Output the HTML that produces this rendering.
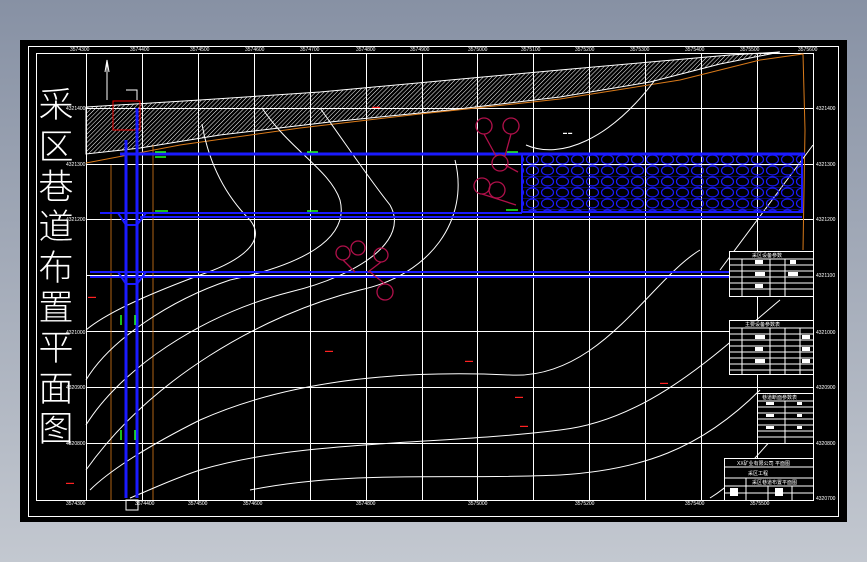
<!DOCTYPE html>
<html><head><meta charset="utf-8"><style>
html,body{margin:0;padding:0;width:867px;height:562px;overflow:hidden;background:linear-gradient(#8791a4,#c3c8d0);}
svg{position:absolute;left:0;top:0}
</style></head><body>
<svg width="867" height="562" viewBox="0 0 867 562" font-family="Liberation Sans, sans-serif">
<defs>
<pattern id="hat" width="3" height="3" patternUnits="userSpaceOnUse" patternTransform="rotate(45)"><line x1="0" y1="0" x2="0" y2="3" stroke="#fff" stroke-width="1"/></pattern>
<pattern id="goaf" width="15" height="11" patternUnits="userSpaceOnUse"><ellipse cx="7.5" cy="5.5" rx="6" ry="4.5" fill="none" stroke="#1a1aff" stroke-width="1.2"/><line x1="0" y1="0" x2="15" y2="0" stroke="#1a1aff" stroke-width="0.8"/></pattern>
</defs>
<rect x="20" y="40" width="827" height="482" fill="#000"/>
<rect x="28.5" y="46.5" width="810" height="470" fill="none" stroke="#fff"/>
<g stroke="#fff" stroke-width="1" fill="none">
<line x1="36.5" y1="53" x2="36.5" y2="500"/>
<line x1="36" y1="53.5" x2="813" y2="53.5"/>
<line x1="36" y1="500.5" x2="813" y2="500.5"/>
<line x1="813.5" y1="53" x2="813.5" y2="500"/>
<line x1="86" y1="108.5" x2="813" y2="108.5"/><line x1="86" y1="164.5" x2="813" y2="164.5"/><line x1="86" y1="219.5" x2="813" y2="219.5"/><line x1="86" y1="275.5" x2="813" y2="275.5"/><line x1="86" y1="331.5" x2="813" y2="331.5"/><line x1="86" y1="387.5" x2="813" y2="387.5"/><line x1="86" y1="443.5" x2="813" y2="443.5"/>
<line x1="86.5" y1="53" x2="86.5" y2="500"/><line x1="142.5" y1="53" x2="142.5" y2="500"/><line x1="198.5" y1="53" x2="198.5" y2="500"/><line x1="254.5" y1="53" x2="254.5" y2="500"/><line x1="310.5" y1="53" x2="310.5" y2="500"/><line x1="366.5" y1="53" x2="366.5" y2="500"/><line x1="422.5" y1="53" x2="422.5" y2="500"/><line x1="477.5" y1="53" x2="477.5" y2="500"/><line x1="533.5" y1="53" x2="533.5" y2="500"/><line x1="589.5" y1="53" x2="589.5" y2="500"/><line x1="645.5" y1="53" x2="645.5" y2="500"/><line x1="701.5" y1="53" x2="701.5" y2="500"/><line x1="757.5" y1="53" x2="757.5" y2="500"/>
</g>
<path d="M86,107 L200,100 L320,92 L450,80 L560,70 L650,62 L730,55 L780,52 L720,64 L650,82 L560,97 L450,110 L330,122 L220,135 L140,148 L86,154 Z" fill="url(#hat)" stroke="#fff" stroke-width="1"/>
<rect x="113" y="101" width="27" height="29" fill="none" stroke="#e00" stroke-width="1"/>
<path d="M86,163 L180,145 L300,128 L420,114 L560,99 L680,80 L760,60 L803,54 L805,130 L803,250" fill="none" stroke="#d97a1a" stroke-width="1"/>
<path d="M111,165 V500 M153,145 V500" stroke="#d97a1a" stroke-width="1" fill="none" opacity=".8"/>
<g stroke="#fff" stroke-width="1" fill="none">
<path d="M202,124 C210,170 230,200 250,220 C270,245 230,265 200,275 C160,290 110,310 86,330"/>
<path d="M262,108 C290,150 330,170 340,200 C350,240 300,265 230,280 C170,300 110,340 86,380"/>
<path d="M320,108 C350,150 370,180 390,205 C410,240 360,275 290,292 C200,315 120,370 86,425"/>
<path d="M455,160 C470,220 430,275 360,290 C260,315 150,380 86,470"/>
<path d="M526,145 C560,160 610,140 655,80"/>
<path d="M700,250 C650,280 600,380 510,375 C400,370 290,380 200,420 C150,445 110,470 90,490"/>
<path d="M780,300 C720,350 650,420 560,430 C440,445 300,440 200,470 C170,480 150,490 130,498"/>
<path d="M760,390 C700,450 640,470 560,475 C450,480 350,470 250,490"/>
<path d="M813,145 C780,190 750,230 720,270"/>
<path d="M790,420 C760,450 740,480 710,498"/>
</g>
<rect x="522" y="154" width="280" height="58" fill="url(#goaf)" stroke="#1a1aff" stroke-width="2"/>
<g stroke="#1a1aff" fill="none">
<line x1="120" y1="154" x2="805" y2="154" stroke-width="3"/>
<line x1="100" y1="213" x2="522" y2="213" stroke-width="2"/>
<line x1="140" y1="217" x2="802" y2="217" stroke-width="2"/>
<line x1="90" y1="272" x2="810" y2="272" stroke-width="2"/>
<line x1="90" y1="277" x2="810" y2="277" stroke-width="2"/>
<line x1="126" y1="140" x2="126" y2="498" stroke-width="3"/>
<line x1="137" y1="108" x2="137" y2="498" stroke-width="3"/>
<path d="M118,213 L126,225 L137,225 L146,213" stroke-width="2"/>
<path d="M118,272 L126,284 L137,284 L146,272" stroke-width="2"/>
</g>
<g stroke="#2f2" stroke-width="1.5">
<line x1="155" y1="152" x2="166" y2="152"/><line x1="155" y1="157" x2="166" y2="157"/>
<line x1="307" y1="152" x2="318" y2="152"/><line x1="507" y1="152" x2="518" y2="152"/>
<line x1="155" y1="211" x2="168" y2="211"/><line x1="307" y1="211" x2="318" y2="211"/><line x1="506" y1="210" x2="518" y2="210"/>
<line x1="121" y1="315" x2="121" y2="325"/><line x1="135" y1="315" x2="135" y2="325"/>
<line x1="121" y1="430" x2="121" y2="440"/><line x1="135" y1="430" x2="135" y2="440"/>
</g>
<g stroke="#b0104a" stroke-width="1.3" fill="none">
<circle cx="484" cy="126" r="8"/><circle cx="511" cy="126" r="8"/><circle cx="500" cy="163" r="8"/><circle cx="482" cy="186" r="8"/><circle cx="497" cy="190" r="8"/>
<path d="M484,134 L496,156 M511,134 L505,156 M505,165 L518,172 M482,194 L516,205"/>
<circle cx="343" cy="253" r="7"/><circle cx="358" cy="248" r="7"/><circle cx="381" cy="255" r="7"/><circle cx="385" cy="292" r="8"/>
<path d="M343,260 L355,272 M381,262 L368,272 M385,284 L370,272"/>
</g>
<g font-size="4" fill="#fff">
<text x="372" y="108" fill="#f22">▬▬</text><text x="563" y="134">▬ ▬</text><text x="325" y="352" fill="#f22">▬▬</text><text x="465" y="362" fill="#f22">▬▬</text><text x="515" y="398" fill="#f22">▬▬</text><text x="520" y="427" fill="#f22">▬▬</text><text x="660" y="384" fill="#f22">▬▬</text><text x="88" y="298" fill="#f22">▬▬</text><text x="66" y="484" fill="#f22">▬▬</text>
</g>
<g font-size="5" fill="#fff">
<text x="70" y="51">3574300</text><text x="130" y="51">3574400</text><text x="190" y="51">3574500</text><text x="245" y="51">3574600</text><text x="300" y="51">3574700</text><text x="356" y="51">3574800</text><text x="410" y="51">3574900</text><text x="468" y="51">3575000</text><text x="521" y="51">3575100</text><text x="575" y="51">3575200</text><text x="630" y="51">3575300</text><text x="685" y="51">3575400</text><text x="740" y="51">3575500</text><text x="798" y="51">3575600</text>
<text x="66" y="110">4321400</text><text x="66" y="166">4321300</text><text x="66" y="221">4321200</text><text x="66" y="334">4321000</text><text x="66" y="389">4320900</text><text x="66" y="445">4320800</text>
<text x="816" y="110">4321400</text><text x="816" y="166">4321300</text><text x="816" y="221">4321200</text><text x="816" y="277">4321100</text><text x="816" y="334">4321000</text><text x="816" y="389">4320900</text><text x="816" y="445">4320800</text><text x="816" y="500">4320700</text>
<text x="66" y="505">3574300</text><text x="135" y="505">3574400</text><text x="188" y="505">3574500</text><text x="243" y="505">3574600</text><text x="356" y="505">3574800</text><text x="468" y="505">3575000</text><text x="575" y="505">3575200</text><text x="685" y="505">3575400</text><text x="750" y="505">3575500</text>
</g>
<path d="M107,60 L107,100 M105,72 L107,60 L109,72" stroke="#fff" fill="none"/>
<path d="M126,90 H137 V100" stroke="#fff" fill="none"/>
<rect x="126" y="500" width="12" height="10" fill="none" stroke="#fff"/>
<g font-family="'Noto Sans CJK SC', sans-serif" font-weight="300" font-size="35" fill="#fff" text-anchor="middle">
<text x="56" y="117">采</text><text x="56" y="159">区</text><text x="56" y="199">巷</text><text x="56" y="239">道</text><text x="56" y="280">布</text><text x="56" y="320">置</text><text x="56" y="360">平</text><text x="56" y="401">面</text><text x="56" y="441">图</text>
</g>
<g stroke="#fff" stroke-width="1" fill="#000">
<rect x="729.5" y="251.5" width="84" height="45"/>
<rect x="729.5" y="320.5" width="84" height="54"/>
<rect x="757.5" y="393.5" width="56" height="50"/>
<rect x="724.5" y="458.5" width="89" height="42"/>
</g>
<g stroke="#fff" stroke-width="1" fill="none">
<path d="M730,259H813M730,265H813M730,271H813M730,277H813M730,283H813M730,289H813M742,259V297M770,259V297M785,259V297"/>
<path d="M730,328H813M730,334H813M730,340H813M730,346H813M730,352H813M730,358H813M730,364H813M730,370H813M742,328V375M770,328V375M785,328V375M800,328V375"/>
<path d="M758,401H813M758,407H813M758,413H813M758,419H813M758,425H813M758,431H813M758,437H813M785,401V444"/>
<path d="M725,467H813M725,478H813M725,486H813M725,493H813M746,478V500M768,486V500M792,486V500"/>
</g>
<g font-size="5" fill="#fff" font-family="Liberation Sans,'Noto Sans CJK SC',sans-serif">
<text x="752" y="257">采区设备参数</text><text x="745" y="326">主要设备参数表</text><text x="762" y="399">巷道断面参数表</text>
<text x="737" y="465">XX矿业有限公司 平面图</text><text x="748" y="475">采区工程</text><text x="752" y="484">采区巷道布置平面图</text>
</g>
<g fill="#fff">
<rect x="755" y="260" width="8" height="4"/><rect x="755" y="272" width="10" height="4"/><rect x="755" y="284" width="8" height="4"/><rect x="790" y="260" width="6" height="4"/><rect x="788" y="272" width="10" height="4"/>
<rect x="755" y="335" width="10" height="4"/><rect x="755" y="347" width="8" height="4"/><rect x="755" y="359" width="10" height="4"/><rect x="802" y="335" width="8" height="4"/><rect x="802" y="347" width="8" height="4"/><rect x="802" y="359" width="8" height="4"/>
<rect x="766" y="402" width="8" height="3"/><rect x="766" y="414" width="8" height="3"/><rect x="766" y="426" width="8" height="3"/><rect x="797" y="402" width="5" height="3"/><rect x="797" y="414" width="5" height="3"/><rect x="797" y="426" width="5" height="3"/>
<rect x="730" y="488" width="8" height="8"/><rect x="775" y="488" width="8" height="8"/>
</g>
</svg>
</body></html>
